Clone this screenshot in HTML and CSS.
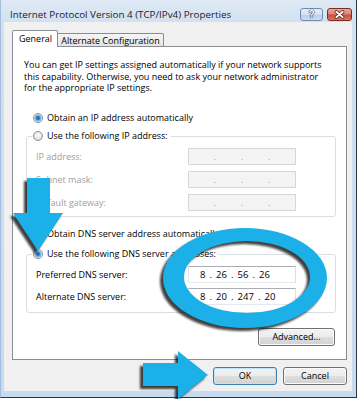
FILE: index.html
```html
<!DOCTYPE html>
<html lang="en">
<head>
<meta charset="utf-8">
<title>Internet Protocol Version 4 (TCP/IPv4) Properties</title>
<link rel="stylesheet" href="styles.css">
</head>
<body>
<div class="window">
  <div class="titlebar">
    <div class="title">Internet Protocol Version 4 (TCP/IPv4) Properties</div>
    <div class="caption">
      <div class="cbtn help"><span class="qmark">?</span></div>
      <div class="cbtn close">
        <svg class="xicon" width="25" height="13" viewBox="0 0 25 13">
          <path class="x-out" d="M9 3.5 L16 9.5 M16 3.5 L9 9.5"/>
          <path class="x-in" d="M9 3.5 L16 9.5 M16 3.5 L9 9.5"/>
        </svg>
      </div>
    </div>
  </div>
  <div class="client">
    <div class="tabs">
      <div class="tab active">General</div>
      <div class="tab inactive">Alternate Configuration</div>
    </div>
    <div class="panel">
      <p class="intro">You can get IP settings assigned automatically if your network supports<br>this capability. Otherwise, you need to ask your network administrator<br>for the appropriate IP settings.</p>
      <div class="radio r1"><span class="rb on"></span><span>Obtain an IP address automatically</span></div>
      <fieldset class="group g1">
        <legend class="radio"><span class="rb"></span><span>Use the following IP address:</span></legend>
        <div class="frow dis"><span class="lbl">IP address:</span><span class="field off"><span>.</span><span>.</span><span>.</span></span></div>
        <div class="frow dis"><span class="lbl">Subnet mask:</span><span class="field off"><span>.</span><span>.</span><span>.</span></span></div>
        <div class="frow dis"><span class="lbl">Default gateway:</span><span class="field off"><span>.</span><span>.</span><span>.</span></span></div>
      </fieldset>
      <div class="radio r3"><span class="rb"></span><span>Obtain DNS server address automatically</span></div>
      <fieldset class="group g2">
        <legend class="radio"><span class="rb on"></span><span>Use the following DNS server addresses:</span></legend>
        <div class="frow"><span class="lbl">Preferred DNS server:</span><span class="field ip">8 . 26 . 56 . 26</span></div>
        <div class="frow"><span class="lbl">Alternate DNS server:</span><span class="field ip">8 . 20 . 247 . 20</span></div>
      </fieldset>
      <div class="adv"><button class="btn adv-btn">Advanced...</button></div>
    </div>
    <div class="actions">
      <button class="btn default">OK</button>
      <button class="btn">Cancel</button>
    </div>
  </div>
</div>
<svg class="marks" width="360" height="399" viewBox="0 0 360 399">
  <path class="mk" d="M27 178H50V213H63L38 251L13 213H27Z"/>
  <path class="mk" d="M143 363H178V351L208 375L178 399V386H143Z"/>
  <path class="mk" fill-rule="evenodd" d="M163 278a82 50 0 1 0 164 0a82 50 0 1 0 -164 0Z M184 277a63 36 0 1 0 126 0a63 36 0 1 0 -126 0Z"/>
</svg>
</body>
</html>
```
FILE: styles.css
```css
* { box-sizing: border-box; }
html, body { margin: 0; padding: 0; background: #ffffff; }
body {
  width: 360px;
  height: 399px;
  overflow: hidden;
  position: relative;
  font-family: "Open Sans", "Noto Sans", sans-serif;
  font-size: 9px;
  color: #000;
}

.window {
  width: 357px;
  height: 398px;
  display: flex;
  flex-direction: column;
  padding: 0 4px 6px 3px;
  background: linear-gradient(to bottom, #dfe9f5 0, #d2e1f1 22px, #c6daf0 100%);
  border-left: 1px solid #a3bddd;
  border-right: 1px solid #2e3845;
  border-bottom: 1px solid #2e3845;
}

.titlebar {
  height: 22px;
  flex: none;
  display: flex;
  align-items: flex-start;
  padding: 8px 0 0 6px;
}
.title {
  flex: 1;
  font-size: 9.8px;
  line-height: 14px;
  color: #1b1b1b;
  white-space: nowrap;
}
.caption { display: flex; gap: 4px; }
.cbtn {
  height: 13px;
  border-radius: 3px;
  display: flex;
  align-items: center;
  justify-content: center;
}
.help {
  width: 23px;
  border: 1px solid #6f8bb0;
  background: linear-gradient(to bottom, #e6eef8 0%, #d3e2f2 50%, #b9cfe8 51%, #c9dcf1 100%);
}
.qmark {
  font-family: "Liberation Sans", Arial, sans-serif;
  font-weight: bold;
  font-size: 10px;
  line-height: 10px;
  color: #fff;
  text-shadow: 0 0 1px #22364f, 0 0 1px #22364f, 0 0 1px #22364f;
}
.close {
  width: 25px;
  border: 1px solid #7a2c22;
  background: linear-gradient(to bottom, #e9aa9c 0%, #dc8573 45%, #c9503c 55%, #d77a5f 100%);
}
.xicon { display: block; }
.x-out { stroke: #4a1a14; stroke-width: 3.6; stroke-linecap: round; fill: none; }
.x-in { stroke: #ffffff; stroke-width: 2; stroke-linecap: round; fill: none; }

.client {
  flex: 1;
  background: #f0f0f0;
  padding: 8px 5px 6px 8px;
  display: flex;
  flex-direction: column;
}

.tabs {
  height: 16px;
  flex: none;
  display: flex;
  align-items: flex-end;
  position: relative;
  z-index: 1;
}
.tab {
  border: 1px solid #898c95;
  border-bottom: none;
  white-space: nowrap;
}
.tab.active {
  width: 46px;
  height: 17px;
  margin-bottom: -1px;
  padding-left: 6px;
  line-height: 15px;
  background: #ffffff;
  border-radius: 2px 2px 0 0;
  position: relative;
  z-index: 2;
}
.tab.inactive {
  width: 107px;
  height: 13px;
  margin-left: -1px;
  padding-top: 1px;
  line-height: 11px;
  text-align: center;
  background: linear-gradient(to bottom, #f5f5f5, #e4e4e4);
  border-radius: 2px 2px 0 0;
}

.panel {
  height: 314px;
  flex: none;
  background: #ffffff;
  border: 1px solid #898c95;
  display: flex;
  flex-direction: column;
}

.intro {
  margin: 12px 0 0 11px;
  line-height: 11.5px;
  height: 34.5px;
  white-space: nowrap;
}

.radio {
  display: flex;
  align-items: center;
  gap: 4px;
  height: 12px;
  line-height: 12px;
  white-space: nowrap;
}
.r1 { margin: 18.5px 0 0 20px; }
.r3 { margin: 11px 0 0 20px; }

.rb {
  flex: none;
  width: 10px;
  height: 10px;
  border-radius: 50%;
  border: 1px solid #8c8f94;
  background: radial-gradient(circle at 50% 40%, #fbfbfb 0, #ececec 3px, #d4d4d4 5px);
}
.rb.on {
  background: radial-gradient(circle at 50% 50%, #1a558e 0, #2f7fc6 1.5px, #5fb0ea 2.6px, #86c6f0 3px, #d9d9d9 3.6px, #f2f2f2 5px);
}

.group {
  margin: 0 10px 0 13px;
  border: 1px solid #d5dfe5;
  border-radius: 3px;
  padding: 6px 0 5px 0;
  min-width: 0;
  display: flex;
  flex-direction: column;
}
.g1 { margin-top: 6px; gap: 6px; }
.g2 { margin-top: 8px; gap: 5px; padding-bottom: 7px; }
.group legend {
  margin-left: 5px;
  padding: 0 3px 0 1px;
}

.frow {
  display: flex;
  align-items: center;
  height: 17px;
  padding-left: 9px;
}
.lbl { width: 152px; flex: none; white-space: nowrap; }
.dis .lbl { color: #a0a0a0; }

.field {
  width: 108px;
  height: 17px;
  flex: none;
  border: 1px solid;
  border-color: #abadb3 #dbdfe6 #e3e9ef #e2e3ea;
  background: #ffffff;
}
.field.off {
  display: flex;
  align-items: center;
  justify-content: space-evenly;
  border-color: #d6d6d6;
  background: #f4f4f4;
  color: #a8a8a8;
  line-height: 12px;
}
.field.ip {
  display: flex;
  align-items: center;
  padding-left: 11px;
  white-space: pre;
  word-spacing: 1.6px;
  font-size: 9.5px;
  color: #000;
}

.adv {
  display: flex;
  justify-content: flex-end;
  margin: 15px 11px 0 0;
}

.btn {
  font-family: inherit;
  font-size: 9px;
  color: #000;
  height: 18px;
  padding: 0;
  border: 1px solid #707070;
  border-radius: 3px;
  background: linear-gradient(to bottom, #f3f3f3 0%, #ececec 50%, #dedede 51%, #d2d2d2 100%);
  box-shadow: inset 0 0 0 1px #fbfbfb;
  line-height: 14px;
}
.adv-btn { width: 77px; }

.actions {
  display: flex;
  justify-content: flex-end;
  gap: 6px;
  margin-top: 7px;
}
.actions .btn { width: 64px; }
.btn.default {
  border-color: #3c7fb1;
  box-shadow: inset 0 0 0 1px #bfe4f8;
}

.marks {
  position: absolute;
  left: 0;
  top: 0;
  pointer-events: none;
  filter: drop-shadow(-3px 3px 1.2px rgba(0, 0, 0, 0.75));
}
.mk { fill: #1bb0e8; }
```
